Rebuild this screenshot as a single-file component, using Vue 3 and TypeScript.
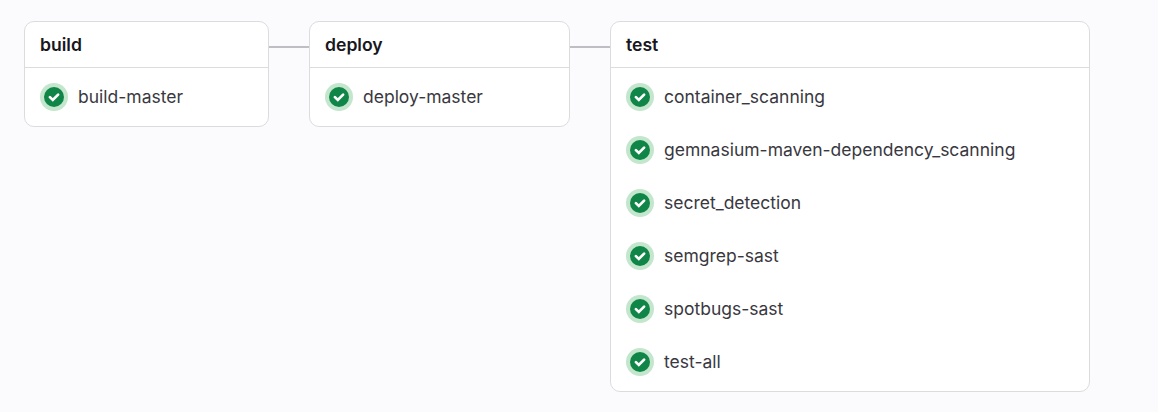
<script setup lang="ts">
interface Stage {
  name: string
  width: string
  jobs: string[]
}

const stages: Stage[] = [
  { name: 'build', width: '245px', jobs: ['build-master'] },
  { name: 'deploy', width: '261px', jobs: ['deploy-master'] },
  {
    name: 'test',
    width: '480px',
    jobs: [
      'container_scanning',
      'gemnasium-maven-dependency_scanning',
      'secret_detection',
      'semgrep-sast',
      'spotbugs-sast',
      'test-all',
    ],
  },
]
</script>

<template>
  <main class="pipeline">
    <template v-for="(stage, index) in stages" :key="stage.name">
      <div v-if="index > 0" class="connector"></div>
      <section class="stage" :style="{ width: stage.width }">
        <h2 class="title">{{ stage.name }}</h2>
        <ul class="jobs">
          <li v-for="job in stage.jobs" :key="job" class="job">
            <svg class="status" viewBox="0 0 28 28" aria-hidden="true">
              <circle cx="14" cy="14" r="14" fill="#c3e6cd" />
              <circle cx="14" cy="14" r="10" fill="#108548" />
              <path d="M9.9 14.1l2.9 2.8 5.3-5.3" fill="none" stroke="#fff" stroke-width="2.7" stroke-linecap="round" stroke-linejoin="miter" />
            </svg>
            <span class="name">{{ job }}</span>
          </li>
        </ul>
      </section>
    </template>
  </main>
</template>

<style>
body {
  background: #fbfafd;
}
</style>

<style scoped>
.pipeline {
  box-sizing: border-box;
  display: flex;
  align-items: flex-start;
  height: 412px;
  padding: 21px 24px;
  font-family: Inter, "Noto Sans", sans-serif;
  font-size: 17.5px;
  color: #3a383f;
}
.stage {
  box-sizing: border-box;
  flex: none;
  border: 1px solid #dcdcde;
  border-radius: 10px;
  background: #fff;
}
.connector {
  flex: none;
  width: 40px;
  height: 2px;
  margin-top: 25px;
  background: #bfbfc3;
}
.title {
  box-sizing: border-box;
  height: 46px;
  margin: 0;
  padding: 0 15px;
  border-bottom: 1px solid #dcdcde;
  font-size: 17.6px;
  font-weight: 600;
  line-height: 46px;
  color: #18171d;
}
.jobs {
  display: flex;
  flex-direction: column;
  gap: 25px;
  margin: 0;
  padding: 15px;
  list-style: none;
}
.job {
  display: flex;
  align-items: center;
  gap: 10px;
  height: 28px;
}
.status {
  flex: none;
  width: 28px;
  height: 28px;
}
.name {
  line-height: 28px;
  white-space: nowrap;
}
</style>
